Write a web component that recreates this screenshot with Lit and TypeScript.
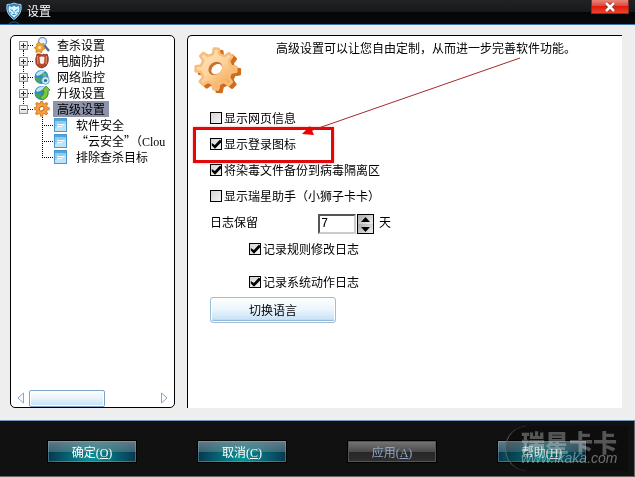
import { LitElement, html, css, svg, nothing } from "lit";
import { customElement, property, state } from "lit/decorators.js";

const gear = (teeth: number) => {
  const pts: string[] = [];
  for (let i = 0; i < teeth; i++) {
    const base = (i / teeth) * Math.PI * 2 - 0.2;
    const step = (Math.PI * 2) / teeth;
    for (const [f, r] of [[0, 15.5], [0.12, 20.5], [0.42, 20.5], [0.54, 15.5], [0.77, 15]]) {
      const a = base + f * step;
      pts.push(`${(22 + Math.cos(a) * r).toFixed(1)},${(22 + Math.sin(a) * r).toFixed(1)}`);
    }
  }
  return pts.join(" ");
};

const gearArt = svg`
  <defs>
    <linearGradient id="gf" x1="0" y1="0" x2=".8" y2="1">
      <stop offset="0" stop-color="#fde3bd"/><stop offset=".5" stop-color="#fdd6a0"/><stop offset="1" stop-color="#f6a24a"/>
    </linearGradient>
  </defs>
  <g stroke-linejoin="round">
    <polygon points=${gear(8)} fill="#d06c1c" stroke="#d06c1c" stroke-width="2.500" transform="translate(3.500 2.500)"/>
    <polygon points=${gear(8)} fill="url(#gf)" stroke="#f7bd7c" stroke-width="2.500"/>
    <ellipse cx="21" cy="21.500" rx="7.500" ry="6" fill="#c9702a" transform="rotate(-40 21 21)"/>
    <ellipse cx="22.500" cy="22.500" rx="6" ry="4.400" fill="#fff" transform="rotate(-40 22 22)"/>
  </g>`;

const globe = svg`
  <circle cx="7.5" cy="8" r="7" fill="#2f8cc4"/>
  <path d="M2 5Q6 0 11 2Q8 6 3 7Z" fill="#bfe8f4"/>
  <path d="M1 9Q5 7 7 10L6 14Q2 13 1 9Z" fill="#49a654"/>`;

const icons: Record<string, unknown> = {
  scan: svg`
    <path d="M10 8L15 14" stroke="#4a6a98" stroke-width="2.4"/>
    <circle cx="8.500" cy="4.500" r="4" fill="#e5f4fd" stroke="#7e9cc4" stroke-width="1.4"/>
    <path d="M5 5L7 7L10 6.500L9.500 9.500L11 12L8.500 13L7.500 16L5 14.500L2 15.500L2 12.500L0 10.500L3 9.500L2.500 7Z" fill="#f5a02a" stroke="#cf7410" stroke-width=".7"/>
    <circle cx="5.600" cy="10.500" r="1.500" fill="#fff0c4"/>`,
  guard: svg`
    <path d="M3 1Q1 6 2 11Q4 15 8 15Q13 14 14 9Q15 4 13 1L11 2L10 1L8 2L6 1Z" fill="#b8492a" stroke="#7d2a16" stroke-width=".8"/>
    <path d="M5.500 4Q8 3 10.500 4L10 10Q8 12 6 10Z" fill="#f6efe8"/>
    <path d="M3.500 3L4 11M12.500 3L12 11" stroke="#e79a74" stroke-width="1"/>`,
  network: svg`${globe}
    <path d="M8 4Q12 3 13 7L9 8Z" fill="#63bf5e"/>
    <circle cx="11.500" cy="11.500" r="3.800" fill="#cfe9f8" stroke="#5a9cc8" stroke-width=".8"/>
    <circle cx="11.500" cy="11.500" r="1.600" fill="#1e6fa6"/>`,
  update: svg`${globe}
    <path d="M6 12Q10 11 10 6L8 6L12 1L16 5L14 6Q15 13 8 15Z" fill="#7cc63e" stroke="#3b8a1d" stroke-width=".8"/>`,
  advanced: svg`<g transform="translate(-.5 -.5) scale(.37)" stroke-linejoin="round">
    <polygon points=${gear(8)} fill="#f6a040" stroke="#e08228" stroke-width="3"/>
    <ellipse cx="22" cy="22" rx="7" ry="5.500" fill="#fff" stroke="#c9641a" stroke-width="2.500" transform="rotate(-40 22 22)"/></g>`,
  page: svg`
    <rect x="1.500" y="1.500" width="12" height="13" fill="#8ccdf2" stroke="#4c98cc"/>
    <path d="M2 2H13V4H2Z" fill="#4fa6dc"/>
    <path d="M2 14V11L13 6V14Z" fill="#bfe4f8"/>
    <path d="M4 7.500H11M4 9.500H9" stroke="#fff"/>`,
};

const shield = svg`
  <path d="M1 2.500Q5 2.500 8 1Q11 2.500 15 2.500Q16.500 12 8 17.500Q-.5 12 1 2.500Z" fill="#2f83bd" stroke="#9bd6f5"/>
  <path d="M3 4L6 5L8 3.500L10 5L13 4L13.500 8L11.500 12.500L8 15.500L4.500 12.500L2.500 8Z" fill="#d7f1fd"/>
  <path d="M4.500 7.500L7 9M11.500 7.500L9 9M6.500 12.500H9.500M8 9.500V11.500M4 10.500L5.500 11M12 10.500L10.500 11" stroke="#2f83bd" stroke-width="1"/>
  <path d="M3 22Q8 18 13 22" fill="none" stroke="#24506e" stroke-width="2" opacity=".6"/>`;

interface Branch {
  icon: string;
  label: string;
  children?: unknown[];
}

const tree: Branch[] = [
  { icon: "scan", label: "查杀设置" },
  { icon: "guard", label: "电脑防护" },
  { icon: "network", label: "网络监控" },
  { icon: "update", label: "升级设置" },
  {
    icon: "advanced",
    label: "高级设置",
    children: ["软件安全", html`“云安全”（<span class="latin">Clou</span>`, "排除查杀目标"],
  },
];

@customElement("settings-tree")
class SettingsTree extends LitElement {
  @state() private selected = 4;

  static styles = css`
    :host { display: flex; flex-direction: column; box-sizing: border-box; width: 165px; flex: none;
      border: 1px solid #000; border-radius: 5px; background: #fff; overflow: hidden; }
    ul { list-style: none; margin: 0; padding: 0; }
    .root { flex: 1; padding: 1px 0 0 8px; }
    .row { display: flex; align-items: center; height: 16px; white-space: nowrap; }
    button { font: inherit; color: inherit; border: 0; padding: 0; background: none; }
    .fold { width: 9px; height: 9px; flex: none; border: 1px solid #8794a8; background: linear-gradient(#fff, #dde1e8); display: flex; }
    .fold svg { display: block; }
    .branch { position: relative; }
    .branch:not(:last-child)::after { content: ""; position: absolute; left: 4px; top: 13px; height: 6px; border-left: 1px dotted #000; }
    .dots { width: 5px; flex: none; border-top: 1px dotted #000; }
    .icon { width: 16px; height: 16px; flex: none; margin-left: 1px; }
    .label { height: 16px; line-height: 16px; padding: 0 4px; margin-left: 3px; }
    .on { background: #8d93a8; }
    .kids { margin-left: 23px; }
    .kid::before { content: ""; width: 11px; height: 16px; flex: none;
      background:
        repeating-linear-gradient(#000 0 1px, transparent 1px 2px) 0 0 / 1px 100% no-repeat,
        repeating-linear-gradient(90deg, #000 0 1px, transparent 1px 2px) 0 8px / 100% 1px no-repeat; }
    .kid:last-child::before { background-size: 1px 8px, 100% 1px; }
    .kid .label { padding: 0; margin-left: 8px; }
    .kid .icon { width: 15px; margin-left: 0; }
    .latin { font: 12px "Liberation Serif", serif; }
    .scroll { display: flex; align-items: center; gap: 4px; height: 18px; padding: 0 6px; }
    .track { flex: 1; }
    .thumb { width: 60%; height: 17px; box-sizing: border-box; border: 1px solid #7ea3c4; border-radius: 2px;
      background: linear-gradient(#fff, #e6f3fc 50%, #c6e1f5); box-shadow: inset 0 0 0 1px #fff; }
    .scroll svg { display: block; }
  `;

  render() {
    return html`
      <ul class="root">
        ${tree.map(
          (b, i) => html`<li class="branch">
            <div class="row">
              <button class="fold" aria-label=${b.children ? "收起" : "展开"}>
                <svg width="7" height="7"><path d=${b.children ? "M1 3.500H6" : "M1 3.500H6M3.500 1V6"} stroke="#1d2f66"/></svg>
              </button>
              <span class="dots"></span>
              <svg class="icon" viewBox="0 0 16 16">${icons[b.icon]}</svg>
              <button class="label ${this.selected === i ? "on" : ""}" @click=${() => (this.selected = i)}>${b.label}</button>
            </div>
            ${b.children
              ? html`<ul class="kids">
                  ${b.children.map(
                    (c) => html`<li class="row kid">
                      <svg class="icon" viewBox="0 0 15 16">${icons.page}</svg>
                      <button class="label">${c}</button>
                    </li>`
                  )}
                </ul>`
              : nothing}
          </li>`
        )}
      </ul>
      <div class="scroll">
        <button aria-label="向左"><svg width="8" height="12"><path d="M6.500 1V11L1 6Z" fill="#fff" stroke="#86a8c8"/></svg></button>
        <div class="track"><div class="thumb"></div></div>
        <button aria-label="向右"><svg width="8" height="12"><path d="M1.500 1V11L7 6Z" fill="#fff" stroke="#86a8c8"/></svg></button>
      </div>
    `;
  }
}

@customElement("advanced-panel")
class AdvancedPanel extends LitElement {
  @state() private days = 7;

  static styles = css`
    :host { display: block; position: relative; box-sizing: border-box; flex: 1; min-width: 0;
      border: solid #000; border-width: 1px 0 0 1px; border-top-left-radius: 5px; background: #fff; padding-left: 22px; }
    .intro { display: flex; gap: 34px; margin-left: -16px; height: 74px; }
    .gear { width: 48px; height: 48px; margin-top: 11px; flex: none; }
    .intro p { margin: 4px 0 0; line-height: 16px; white-space: nowrap; }
    .options { display: grid; gap: 10px; }
    .check { display: flex; align-items: center; gap: 2px; height: 16px; white-space: nowrap; width: max-content; }
    .check input { appearance: none; width: 12px; height: 12px; margin: 0; border: 1px solid #000; background: linear-gradient(135deg, #d4d4d4, #f4f4f4); display: grid; }
    .check input:checked::after { content: ""; width: 10px; height: 10px; background: #000;
      clip-path: polygon(8% 40%, 38% 60%, 88% 8%, 100% 16%, 100% 34%, 40% 98%, 8% 66%); }
    .keep { display: flex; height: 20px; margin-bottom: -3px; }
    .keep label, .unit { line-height: 16px; }
    .keep label { width: 108px; }
    .days { box-sizing: border-box; width: 38px; height: 20px; margin: 0; padding: 0 1px 1px; font: 12px "Liberation Mono", monospace;
      border: 2px solid; border-color: #555 #ccc #ccc #555; border-radius: 0; background: #fff; }
    .spin { display: grid; grid-template-rows: 1fr 1fr; width: 17px; margin: 0 5px 0 1px; box-sizing: border-box; border: 1px solid #000; }
    .spin button { padding: 0; border: 0; background: linear-gradient(135deg, #aaa, #f0f0f0); display: grid; place-items: center; }
    .spin svg { display: block; }
    .sub { display: grid; gap: 17px; margin: 0 0 0 39px; }
    .lang { width: 126px; height: 26px; margin-top: 7px; padding: 0; font: inherit; color: #000;
      border: 1px solid #9dbddb; border-radius: 3px; background: linear-gradient(#fff, #e9f5fd 50%, #bfdef4);
      box-shadow: inset 0 0 0 1px #fff, inset 0 -2px 1px #8db5d8; }
    .mark { position: absolute; left: 5px; top: 91px; width: 141px; height: 36px; box-sizing: border-box; border: 3px solid #e00808; box-shadow: 0 0 2px #f99; pointer-events: none; }
    .arrow { position: absolute; left: 114px; top: 21px; pointer-events: none; }
  `;

  private check(label: string, on: boolean) {
    return html`<label class="check"><input type="checkbox" .checked=${on} />${label}</label>`;
  }

  render() {
    return html`
      <div class="intro">
        <svg class="gear" viewBox="0 0 48 48">${gearArt}</svg>
        <p>高级设置可以让您自由定制，从而进一步完善软件功能。</p>
      </div>
      <div class="options">
        ${this.check("显示网页信息", false)}
        ${this.check("显示登录图标", true)}
        ${this.check("将染毒文件备份到病毒隔离区", true)}
        ${this.check("显示瑞星助手（小狮子卡卡）", false)}
        <div class="keep">
          <label for="days">日志保留</label>
          <input id="days" class="days" type="text" .value=${String(this.days)} />
          <div class="spin">
            <button aria-label="增加" @click=${() => this.days++}><svg width="11" height="6"><path d="M5.500 0L10 5H1Z"/></svg></button>
            <button aria-label="减少" @click=${() => (this.days = Math.max(1, this.days - 1))}><svg width="11" height="6"><path d="M5.500 6L10 1H1Z"/></svg></button>
          </div>
          <span class="unit">天</span>
        </div>
        <div class="sub">${this.check("记录规则修改日志", true)}${this.check("记录系统动作日志", true)}</div>
      </div>
      <button class="lang">切换语言</button>
      <div class="mark"></div>
      <svg class="arrow" width="222" height="82">
        <path d="M218 1L8 74" stroke="#a82828" fill="none"/>
        <path d="M0 77L8 69L12 78Z" fill="#f00000"/>
      </svg>
    `;
  }
}

@customElement("dialog-button")
class DialogButton extends LitElement {
  @property() label = "";
  @property() key = "";
  @property({ type: Boolean }) off = false;

  static styles = css`
    button { display: block; box-sizing: border-box; width: 90px; height: 23px; padding: 0; color: #fff; font: inherit;
      line-height: 19px; border: 1px solid #000;
      background: linear-gradient(rgba(190, 190, 190, .5), rgba(130, 160, 165, .4) 50%, transparent 50%),
        radial-gradient(ellipse 45px 24px at 50% 80%, #07969a, #08364f); box-shadow: inset 0 0 0 1px rgba(150, 190, 200, .4); }
    button:disabled { color: #8fa6c6; background: linear-gradient(#777, #4c4c4c 50%, #262626 50%, #303030);
      box-shadow: inset 0 0 0 1px #555; }
    .key { font: 12px "Liberation Serif", serif; }
  `;

  render() {
    return html`<button ?disabled=${this.off}>${this.label}<span class="key">(<u>${this.key}</u>)</span></button>`;
  }
}

@customElement("app-root")
class AppRoot extends LitElement {
  static styles = css`
    :host { display: flex; flex-direction: column; min-height: 100vh; box-sizing: border-box; background: #eee;
      font: 12px/16px "Noto Sans CJK SC", sans-serif; color: #000; }
    header { display: flex; align-items: flex-start; justify-content: space-between; height: 24px; padding: 0 6px;
      color: #fff; background: linear-gradient(#202224, #16181a 50%, #050505 50%, #0a0a0a); border-bottom: 1px solid #3f74b4; }
    h1 { display: flex; gap: 5px; margin: 0; font-size: 12px; font-weight: 400; line-height: 21px; }
    .shield { width: 16px; height: 22px; margin-top: 2px; }
    .close { width: 38px; height: 14px; padding: 0; border: 1px solid #7d3028; border-top: 0; display: grid; place-items: center;
      background: linear-gradient(#e8867c, #dc4a3c 45%, #e01c0c 50%, #f0402c); }
    main { flex: 1; display: flex; gap: 12px; padding: 10px 13px 12px 10px; }
    settings-tree, advanced-panel { min-height: 300px; }
    footer { position: relative; display: flex; gap: 60px; padding: 19px 48px 13px 47px; background: #111;
      border-top: 1px solid #7898bc; border-bottom: 1px solid #666; border-right: 1px solid #666; }
    .brand { position: absolute; right: 6px; top: 5px; width: 123px; height: 45px; box-sizing: border-box; padding: 7px 0 0 15px;
      border-left: 1px solid #666; border-radius: 23px 0 0 23px; background: rgba(0, 0, 0, .2);
      color: #4c4c4c; white-space: nowrap; pointer-events: none; }
    .name, .site { display: block; mix-blend-mode: screen; }
    .name { font-size: 24px; font-weight: 900; line-height: 18px; }
    .site { color: #666; font: italic 14px/14px "Liberation Sans", sans-serif; }
  `;

  render() {
    return html`
      <header>
        <h1><svg class="shield" viewBox="0 0 16 22">${shield}</svg>设置</h1>
        <button class="close" aria-label="关闭">
          <svg width="12" height="10" viewBox="0 0 12 10"><path d="M2 1L10 9M10 1L2 9" stroke="#8a2a20" stroke-width="4"/><path d="M2 1L10 9M10 1L2 9" stroke="#fff" stroke-width="2.500"/></svg>
        </button>
      </header>
      <main>
        <settings-tree></settings-tree>
        <advanced-panel></advanced-panel>
      </main>
      <footer>
        <dialog-button label="确定" key="O"></dialog-button>
        <dialog-button label="取消" key="C"></dialog-button>
        <dialog-button label="应用" key="A" off></dialog-button>
        <dialog-button label="帮助" key="H"></dialog-button>
        <div class="brand"><span class="name">瑞星卡卡</span><span class="site">www.ikaka.com</span></div>
      </footer>
    `;
  }
}
